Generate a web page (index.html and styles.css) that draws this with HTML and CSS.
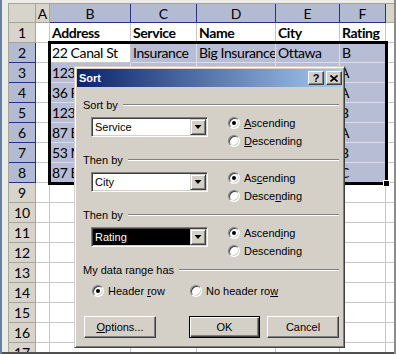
FILE: index.html
```html
<!DOCTYPE html>
<html lang="en">
<head>
    <meta charset="UTF-8">
    <title>Sort</title>
    <link rel="stylesheet" href="styles.css">
</head>
<body>
    <div class="frame">
        <!-- Worksheet -->
        <div class="sheet">
            <div class="h"></div><div class="h">A</div><div class="h hs">B</div><div class="h hs">C</div><div class="h hs">D</div><div class="h hs">E</div><div class="h hs">F</div><div class="h"></div>

            <div class="h">1</div><div class="c"></div><div class="c b">Address</div><div class="c b">Service</div><div class="c b">Name</div><div class="c b">City</div><div class="c b">Rating</div><div class="c"></div>
            <div class="h hs">2</div><div class="c"></div><div class="c">22 Canal St</div><div class="c s">Insurance</div><div class="c s">Big Insurance</div><div class="c s">Ottawa</div><div class="c s">B</div><div class="c"></div>
            <div class="h hs">3</div><div class="c"></div><div class="c s">123</div><div class="c s"></div><div class="c s"></div><div class="c s"></div><div class="c s f">A</div><div class="c"></div>
            <div class="h hs">4</div><div class="c"></div><div class="c s">36 Pa</div><div class="c s"></div><div class="c s"></div><div class="c s"></div><div class="c s f">A</div><div class="c"></div>
            <div class="h hs">5</div><div class="c"></div><div class="c s">123 E</div><div class="c s"></div><div class="c s"></div><div class="c s"></div><div class="c s f">B</div><div class="c"></div>
            <div class="h hs">6</div><div class="c"></div><div class="c s">87 Ea</div><div class="c s"></div><div class="c s"></div><div class="c s"></div><div class="c s f">A</div><div class="c"></div>
            <div class="h hs">7</div><div class="c"></div><div class="c s">53 Ma</div><div class="c s"></div><div class="c s"></div><div class="c s"></div><div class="c s f">B</div><div class="c"></div>
            <div class="h hs">8</div><div class="c"></div><div class="c s">87 El</div><div class="c s"></div><div class="c s"></div><div class="c s"></div><div class="c s f">C</div><div class="c"></div>

            <div class="h">9</div><div class="c"></div><div class="c"></div><div class="c"></div><div class="c"></div><div class="c"></div><div class="c"></div><div class="c"></div>
            <div class="h">10</div><div class="c"></div><div class="c"></div><div class="c"></div><div class="c"></div><div class="c"></div><div class="c"></div><div class="c"></div>
            <div class="h">11</div><div class="c"></div><div class="c"></div><div class="c"></div><div class="c"></div><div class="c"></div><div class="c"></div><div class="c"></div>
            <div class="h">12</div><div class="c"></div><div class="c"></div><div class="c"></div><div class="c"></div><div class="c"></div><div class="c"></div><div class="c"></div>
            <div class="h">13</div><div class="c"></div><div class="c"></div><div class="c"></div><div class="c"></div><div class="c"></div><div class="c"></div><div class="c"></div>
            <div class="h">14</div><div class="c"></div><div class="c"></div><div class="c"></div><div class="c"></div><div class="c"></div><div class="c"></div><div class="c"></div>
            <div class="h">15</div><div class="c"></div><div class="c"></div><div class="c"></div><div class="c"></div><div class="c"></div><div class="c"></div><div class="c"></div>
            <div class="h">16</div><div class="c"></div><div class="c"></div><div class="c"></div><div class="c"></div><div class="c"></div><div class="c"></div><div class="c"></div>
            <div class="h">17</div><div class="c"></div><div class="c"></div><div class="c"></div><div class="c"></div><div class="c"></div><div class="c"></div><div class="c"></div>
        </div>

        <!-- Selected range B2:F8 -->
        <div class="selection"><span class="handle"></span></div>

        <!-- Sort dialog -->
        <div class="dialog">
            <div class="titlebar">
                <span class="title">Sort</span>
                <span class="tbtn help">?</span>
                <span class="tbtn">
                    <svg width="8" height="7" viewBox="0 0 8 7"><path d="M0.5 0.5 L7.5 6.5 M7.5 0.5 L0.5 6.5" stroke="#000" stroke-width="1.6"/></svg>
                </span>
            </div>

            <div class="content">
                <div class="group">
                    <div class="legend">Sort by</div>
                    <div class="group-row">
                        <div class="combo"><span class="value">Service</span><span class="arrow"></span></div>
                        <div class="radios">
                            <div class="radio"><span class="circle checked"></span><span><u>A</u>scending</span></div>
                            <div class="radio"><span class="circle"></span><span><u>D</u>escending</span></div>
                        </div>
                    </div>
                </div>

                <div class="group">
                    <div class="legend">Then by</div>
                    <div class="group-row">
                        <div class="combo"><span class="value">City</span><span class="arrow"></span></div>
                        <div class="radios">
                            <div class="radio"><span class="circle checked"></span><span>As<u>c</u>ending</span></div>
                            <div class="radio"><span class="circle"></span><span>Desce<u>n</u>ding</span></div>
                        </div>
                    </div>
                </div>

                <div class="group">
                    <div class="legend">Then by</div>
                    <div class="group-row">
                        <div class="combo focus"><span class="value">Rating</span><span class="arrow"></span></div>
                        <div class="radios">
                            <div class="radio"><span class="circle checked"></span><span>Ascend<u>i</u>ng</span></div>
                            <div class="radio"><span class="circle"></span><span>Descendin<u>g</u></span></div>
                        </div>
                    </div>
                </div>

                <div class="group">
                    <div class="legend">My data range has</div>
                    <div class="opts">
                        <div class="radio first"><span class="circle checked"></span><span>Header <u>r</u>ow</span></div>
                        <div class="radio"><span class="circle"></span><span>No header ro<u>w</u></span></div>
                    </div>
                </div>

                <div class="buttons">
                    <button class="btn options"><u>O</u>ptions...</button>
                    <button class="btn ok">OK</button>
                    <button class="btn cancel">Cancel</button>
                </div>
            </div>
        </div>
    </div>
</body>
</html>
```

FILE: styles.css
```css
/* Page frame */
body {
    margin: 0;
}

.frame {
    position: relative;
    width: 396px;
    height: 354px;
    box-sizing: border-box;
    padding: 3px 0 0 8px;
    background-color: #ecebe6;
    box-shadow: inset 2px 0 #6d7f96, inset -2px 0 #8c8c8c, inset 0 -2px #505050;
    overflow: hidden;
    font-family: Lato, "Liberation Sans", sans-serif;
    font-size: 14px;
    color: #000;
}

/* Worksheet grid */
.sheet {
    display: grid;
    grid-template-columns: 27px 14px 81px 66px 79px 64px 46px 20px;
    grid-template-rows: 19px;
    grid-auto-rows: 20px;
    width: 386px;
    height: 349px;
    box-sizing: border-box;
    border-top: 1px solid #a8a598;
    border-left: 1px solid #a8a598;
    overflow: hidden;
}

.sheet > div {
    box-sizing: border-box;
    white-space: nowrap;
    overflow: hidden;
}

.c {
    background-color: #fff;
    border-right: 1px solid #c6c6c6;
    border-bottom: 1px solid #c6c6c6;
    padding-left: 2px;
    line-height: 19px;
    letter-spacing: -0.4px;
}

.c.b {
    font-weight: bold;
}

.c.s {
    background-color: #b6bdd4;
    border-color: #dadeea;
}

.c.f {
    padding-left: 0;
}

.h {
    background-color: #d7d4cb;
    border-right: 1px solid #a8a598;
    border-bottom: 1px solid #a8a598;
    text-align: center;
    line-height: 19px;
}

.h.hs {
    background-color: #b3bbd2;
    border-color: #26357a;
}

/* Selection outline */
.selection {
    position: absolute;
    left: 48px;
    top: 41px;
    width: 340px;
    height: 144px;
    box-sizing: border-box;
    border: 3px solid #000;
}

.handle {
    position: absolute;
    right: -5px;
    bottom: -5px;
    width: 7px;
    height: 7px;
    box-sizing: border-box;
    background-color: #000;
    border: 1px solid #fff;
}

/* Dialog window */
.dialog {
    position: absolute;
    left: 74px;
    top: 66px;
    width: 271px;
    height: 282px;
    box-sizing: border-box;
    padding: 2px;
    background-color: #d4d0c8;
    border: 1px solid;
    border-color: #d4d0c8 #404040 #404040 #d4d0c8;
    box-shadow: inset 1px 1px #fff, inset -1px -1px #808080;
    font-family: "Liberation Sans", Arial, sans-serif;
    font-size: 11px;
    color: #000;
}

.titlebar {
    display: flex;
    align-items: center;
    height: 18px;
    padding: 0 0 0 2px;
    background: linear-gradient(to right, #0a246a, #a6caf0);
    color: #fff;
}

.title {
    flex: 1;
    font-weight: bold;
}

.tbtn {
    display: flex;
    align-items: center;
    justify-content: center;
    width: 16px;
    height: 14px;
    box-sizing: border-box;
    background-color: #d4d0c8;
    border: 1px solid;
    border-color: #fff #404040 #404040 #fff;
    box-shadow: inset -1px -1px #808080;
    color: #000;
    font-weight: bold;
    font-size: 11px;
}

.tbtn + .tbtn {
    margin-left: 2px;
}

.content {
    padding: 11px 3px 0 6px;
}

.legend {
    display: flex;
    align-items: center;
    height: 14px;
}

.legend::after {
    content: "";
    flex: 1;
    margin-left: 5px;
    border-top: 1px solid #808080;
    border-bottom: 1px solid #fff;
}

.group {
    margin-bottom: 3px;
}

.group-row {
    display: flex;
    height: 36px;
    margin-top: 2px;
}

/* Combo box */
.combo {
    display: flex;
    width: 117px;
    height: 20px;
    margin: 3px 0 0 8px;
    box-sizing: border-box;
    padding: 1px;
    background-color: #fff;
    border: 1px solid;
    border-color: #808080 #fff #fff #808080;
    box-shadow: inset 1px 1px #404040, inset -1px -1px #d4d0c8;
}

.combo .value {
    flex: 1;
    padding-left: 2px;
    line-height: 16px;
}

.combo.focus .value {
    background-color: #000;
    color: #fff;
}

.arrow {
    display: flex;
    align-items: center;
    justify-content: center;
    width: 16px;
    box-sizing: border-box;
    background-color: #d4d0c8;
    border: 1px solid;
    border-color: #d4d0c8 #404040 #404040 #d4d0c8;
    box-shadow: inset 1px 1px #fff, inset -1px -1px #808080;
}

.arrow::before {
    content: "";
    width: 7px;
    height: 4px;
    background-color: #000;
    clip-path: polygon(0 0, 100% 0, 50% 100%);
}

/* Radio buttons */
.radios {
    display: flex;
    flex-direction: column;
    margin-left: 20px;
}

.radio {
    display: flex;
    align-items: center;
    gap: 4px;
    height: 18px;
}

.circle {
    display: flex;
    align-items: center;
    justify-content: center;
    width: 12px;
    height: 12px;
    box-sizing: border-box;
    border-radius: 50%;
    background-color: #fff;
    border: 1px solid;
    border-color: #808080 #fff #fff #808080;
    box-shadow: inset 1px 1px #404040, inset -1px -1px #d4d0c8;
}

.circle.checked::after {
    content: "";
    width: 4px;
    height: 4px;
    border-radius: 50%;
    background-color: #000;
}

.opts {
    display: flex;
    height: 18px;
    margin-top: 5px;
    padding-left: 9px;
}

.opts .first {
    width: 98px;
}

/* Push buttons */
.buttons {
    display: flex;
    margin-top: 16px;
}

.btn {
    height: 22px;
    padding: 0;
    box-sizing: border-box;
    background-color: #d4d0c8;
    border: 1px solid;
    border-color: #fff #404040 #404040 #fff;
    box-shadow: inset -1px -1px #808080;
    font-family: "Liberation Sans", Arial, sans-serif;
    font-size: 11px;
    color: #000;
}

.btn.options {
    width: 72px;
    margin-left: 1px;
}

.btn.ok {
    width: 71px;
    margin-left: 33px;
    border-color: #000;
    box-shadow: inset 1px 1px #fff, inset -1px -1px #404040, inset -2px -2px #808080;
}

.btn.cancel {
    width: 72px;
    margin-left: 7px;
}
```
